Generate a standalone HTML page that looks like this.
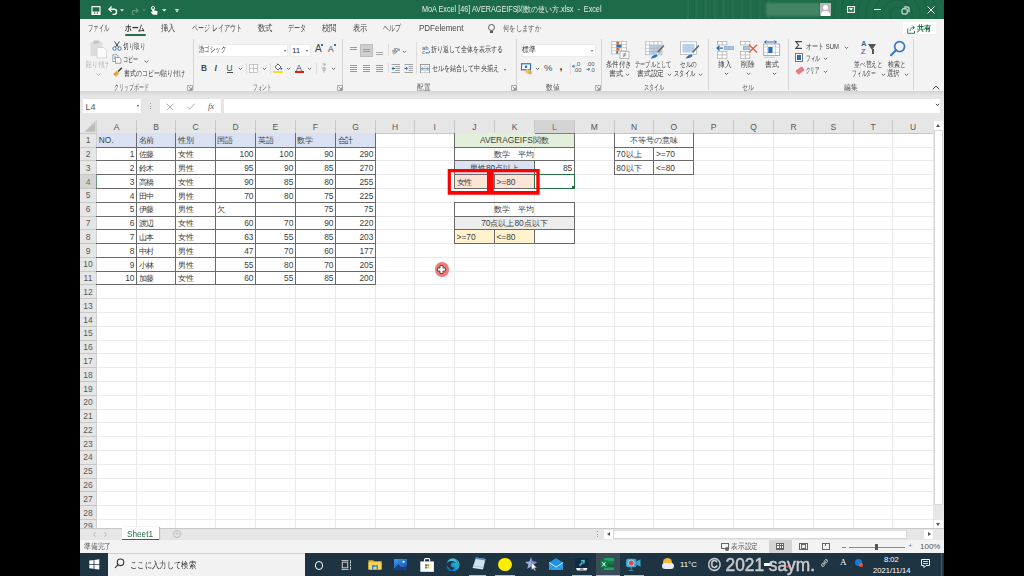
<!DOCTYPE html><html><head><meta charset='utf-8'><style>
*{margin:0;padding:0;box-sizing:border-box}
html,body{width:1024px;height:576px;overflow:hidden;background:#000;font-family:"Liberation Sans",sans-serif}
.a{position:absolute}
.t{position:absolute;white-space:nowrap;line-height:1}
.k{display:inline-block;font-size:1em;width:.95em;text-align:center;font-style:normal;overflow:visible}
</style></head><body><div class='a' style='left:0;top:0;width:1024px;height:576px;filter:blur(0.5px)'><div class="a" style="left:80px;top:0;width:864px;height:576px;background:#f3f3f3"></div>
<div class="a" style="left:80px;top:0;width:864px;height:19px;background:#1d6b48"></div>
<div class="a" style="left:80px;top:19px;width:864px;height:73px;background:#f3f3f3"></div>
<div class="a" style="left:80px;top:92px;width:864px;height:28px;background:#e6e6e6"></div>
<div class="a" style="left:80px;top:91px;width:864px;height:5px;background:linear-gradient(#d4d4d4,#e6e6e6)"></div>
<div class="a" style="left:83px;top:99px;width:58px;height:14px;background:#fff"></div>
<div class="a" style="left:160px;top:99px;width:61px;height:14px;background:#fff"></div>
<div class="a" style="left:224px;top:99px;width:716px;height:14px;background:#fff"></div>
<div class="t" style="left:85.5px;top:103.3px;font-size:9px;color:#5a5a5a">L4</div>
<div class="a" style="left:80px;top:120px;width:853.1px;height:13px;background:#e6e6e6"></div>
<div class="a" style="left:80px;top:133px;width:16.5px;height:395px;background:#e6e6e6"></div>
<div class="a" style="left:96.65px;top:133.3px;width:836.45px;height:394.7px;background:#fff"></div>
<div class="a" style="left:136.00px;top:133.3px;width:1px;height:394.7px;background:#eaeaea"></div>
<div class="a" style="left:136.00px;top:120px;width:1px;height:13px;background:#c8c8c8"></div>
<div class="a" style="left:175.05px;top:133.3px;width:1px;height:394.7px;background:#eaeaea"></div>
<div class="a" style="left:175.05px;top:120px;width:1px;height:13px;background:#c8c8c8"></div>
<div class="a" style="left:214.90px;top:133.3px;width:1px;height:394.7px;background:#eaeaea"></div>
<div class="a" style="left:214.90px;top:120px;width:1px;height:13px;background:#c8c8c8"></div>
<div class="a" style="left:255.05px;top:133.3px;width:1px;height:394.7px;background:#eaeaea"></div>
<div class="a" style="left:255.05px;top:120px;width:1px;height:13px;background:#c8c8c8"></div>
<div class="a" style="left:294.85px;top:133.3px;width:1px;height:394.7px;background:#eaeaea"></div>
<div class="a" style="left:294.85px;top:120px;width:1px;height:13px;background:#c8c8c8"></div>
<div class="a" style="left:335.00px;top:133.3px;width:1px;height:394.7px;background:#eaeaea"></div>
<div class="a" style="left:335.00px;top:120px;width:1px;height:13px;background:#c8c8c8"></div>
<div class="a" style="left:374.90px;top:133.3px;width:1px;height:394.7px;background:#eaeaea"></div>
<div class="a" style="left:374.90px;top:120px;width:1px;height:13px;background:#c8c8c8"></div>
<div class="a" style="left:414.30px;top:133.3px;width:1px;height:394.7px;background:#eaeaea"></div>
<div class="a" style="left:414.30px;top:120px;width:1px;height:13px;background:#c8c8c8"></div>
<div class="a" style="left:454.00px;top:133.3px;width:1px;height:394.7px;background:#eaeaea"></div>
<div class="a" style="left:454.00px;top:120px;width:1px;height:13px;background:#c8c8c8"></div>
<div class="a" style="left:493.90px;top:133.3px;width:1px;height:394.7px;background:#eaeaea"></div>
<div class="a" style="left:493.90px;top:120px;width:1px;height:13px;background:#c8c8c8"></div>
<div class="a" style="left:534.10px;top:133.3px;width:1px;height:394.7px;background:#eaeaea"></div>
<div class="a" style="left:534.10px;top:120px;width:1px;height:13px;background:#c8c8c8"></div>
<div class="a" style="left:573.80px;top:133.3px;width:1px;height:394.7px;background:#eaeaea"></div>
<div class="a" style="left:573.80px;top:120px;width:1px;height:13px;background:#c8c8c8"></div>
<div class="a" style="left:613.85px;top:133.3px;width:1px;height:394.7px;background:#eaeaea"></div>
<div class="a" style="left:613.85px;top:120px;width:1px;height:13px;background:#c8c8c8"></div>
<div class="a" style="left:653.40px;top:133.3px;width:1px;height:394.7px;background:#eaeaea"></div>
<div class="a" style="left:653.40px;top:120px;width:1px;height:13px;background:#c8c8c8"></div>
<div class="a" style="left:693.25px;top:133.3px;width:1px;height:394.7px;background:#eaeaea"></div>
<div class="a" style="left:693.25px;top:120px;width:1px;height:13px;background:#c8c8c8"></div>
<div class="a" style="left:732.95px;top:133.3px;width:1px;height:394.7px;background:#eaeaea"></div>
<div class="a" style="left:732.95px;top:120px;width:1px;height:13px;background:#c8c8c8"></div>
<div class="a" style="left:773.00px;top:133.3px;width:1px;height:394.7px;background:#eaeaea"></div>
<div class="a" style="left:773.00px;top:120px;width:1px;height:13px;background:#c8c8c8"></div>
<div class="a" style="left:812.90px;top:133.3px;width:1px;height:394.7px;background:#eaeaea"></div>
<div class="a" style="left:812.90px;top:120px;width:1px;height:13px;background:#c8c8c8"></div>
<div class="a" style="left:852.70px;top:133.3px;width:1px;height:394.7px;background:#eaeaea"></div>
<div class="a" style="left:852.70px;top:120px;width:1px;height:13px;background:#c8c8c8"></div>
<div class="a" style="left:892.35px;top:133.3px;width:1px;height:394.7px;background:#eaeaea"></div>
<div class="a" style="left:892.35px;top:120px;width:1px;height:13px;background:#c8c8c8"></div>
<div class="a" style="left:96.65px;top:146.59px;width:836.45px;height:1px;background:#eaeaea"></div>
<div class="a" style="left:80px;top:146.59px;width:16.5px;height:1px;background:#c8c8c8"></div>
<div class="a" style="left:96.65px;top:160.38px;width:836.45px;height:1px;background:#eaeaea"></div>
<div class="a" style="left:80px;top:160.38px;width:16.5px;height:1px;background:#c8c8c8"></div>
<div class="a" style="left:96.65px;top:174.17px;width:836.45px;height:1px;background:#eaeaea"></div>
<div class="a" style="left:80px;top:174.17px;width:16.5px;height:1px;background:#c8c8c8"></div>
<div class="a" style="left:96.65px;top:187.96px;width:836.45px;height:1px;background:#eaeaea"></div>
<div class="a" style="left:80px;top:187.96px;width:16.5px;height:1px;background:#c8c8c8"></div>
<div class="a" style="left:96.65px;top:201.75px;width:836.45px;height:1px;background:#eaeaea"></div>
<div class="a" style="left:80px;top:201.75px;width:16.5px;height:1px;background:#c8c8c8"></div>
<div class="a" style="left:96.65px;top:215.54px;width:836.45px;height:1px;background:#eaeaea"></div>
<div class="a" style="left:80px;top:215.54px;width:16.5px;height:1px;background:#c8c8c8"></div>
<div class="a" style="left:96.65px;top:229.33px;width:836.45px;height:1px;background:#eaeaea"></div>
<div class="a" style="left:80px;top:229.33px;width:16.5px;height:1px;background:#c8c8c8"></div>
<div class="a" style="left:96.65px;top:243.12px;width:836.45px;height:1px;background:#eaeaea"></div>
<div class="a" style="left:80px;top:243.12px;width:16.5px;height:1px;background:#c8c8c8"></div>
<div class="a" style="left:96.65px;top:256.91px;width:836.45px;height:1px;background:#eaeaea"></div>
<div class="a" style="left:80px;top:256.91px;width:16.5px;height:1px;background:#c8c8c8"></div>
<div class="a" style="left:96.65px;top:270.70px;width:836.45px;height:1px;background:#eaeaea"></div>
<div class="a" style="left:80px;top:270.70px;width:16.5px;height:1px;background:#c8c8c8"></div>
<div class="a" style="left:96.65px;top:284.49px;width:836.45px;height:1px;background:#eaeaea"></div>
<div class="a" style="left:80px;top:284.49px;width:16.5px;height:1px;background:#c8c8c8"></div>
<div class="a" style="left:96.65px;top:298.28px;width:836.45px;height:1px;background:#eaeaea"></div>
<div class="a" style="left:80px;top:298.28px;width:16.5px;height:1px;background:#c8c8c8"></div>
<div class="a" style="left:96.65px;top:312.07px;width:836.45px;height:1px;background:#eaeaea"></div>
<div class="a" style="left:80px;top:312.07px;width:16.5px;height:1px;background:#c8c8c8"></div>
<div class="a" style="left:96.65px;top:325.86px;width:836.45px;height:1px;background:#eaeaea"></div>
<div class="a" style="left:80px;top:325.86px;width:16.5px;height:1px;background:#c8c8c8"></div>
<div class="a" style="left:96.65px;top:339.65px;width:836.45px;height:1px;background:#eaeaea"></div>
<div class="a" style="left:80px;top:339.65px;width:16.5px;height:1px;background:#c8c8c8"></div>
<div class="a" style="left:96.65px;top:353.44px;width:836.45px;height:1px;background:#eaeaea"></div>
<div class="a" style="left:80px;top:353.44px;width:16.5px;height:1px;background:#c8c8c8"></div>
<div class="a" style="left:96.65px;top:367.23px;width:836.45px;height:1px;background:#eaeaea"></div>
<div class="a" style="left:80px;top:367.23px;width:16.5px;height:1px;background:#c8c8c8"></div>
<div class="a" style="left:96.65px;top:381.02px;width:836.45px;height:1px;background:#eaeaea"></div>
<div class="a" style="left:80px;top:381.02px;width:16.5px;height:1px;background:#c8c8c8"></div>
<div class="a" style="left:96.65px;top:394.81px;width:836.45px;height:1px;background:#eaeaea"></div>
<div class="a" style="left:80px;top:394.81px;width:16.5px;height:1px;background:#c8c8c8"></div>
<div class="a" style="left:96.65px;top:408.60px;width:836.45px;height:1px;background:#eaeaea"></div>
<div class="a" style="left:80px;top:408.60px;width:16.5px;height:1px;background:#c8c8c8"></div>
<div class="a" style="left:96.65px;top:422.39px;width:836.45px;height:1px;background:#eaeaea"></div>
<div class="a" style="left:80px;top:422.39px;width:16.5px;height:1px;background:#c8c8c8"></div>
<div class="a" style="left:96.65px;top:436.18px;width:836.45px;height:1px;background:#eaeaea"></div>
<div class="a" style="left:80px;top:436.18px;width:16.5px;height:1px;background:#c8c8c8"></div>
<div class="a" style="left:96.65px;top:449.97px;width:836.45px;height:1px;background:#eaeaea"></div>
<div class="a" style="left:80px;top:449.97px;width:16.5px;height:1px;background:#c8c8c8"></div>
<div class="a" style="left:96.65px;top:463.76px;width:836.45px;height:1px;background:#eaeaea"></div>
<div class="a" style="left:80px;top:463.76px;width:16.5px;height:1px;background:#c8c8c8"></div>
<div class="a" style="left:96.65px;top:477.55px;width:836.45px;height:1px;background:#eaeaea"></div>
<div class="a" style="left:80px;top:477.55px;width:16.5px;height:1px;background:#c8c8c8"></div>
<div class="a" style="left:96.65px;top:491.34px;width:836.45px;height:1px;background:#eaeaea"></div>
<div class="a" style="left:80px;top:491.34px;width:16.5px;height:1px;background:#c8c8c8"></div>
<div class="a" style="left:96.65px;top:505.13px;width:836.45px;height:1px;background:#eaeaea"></div>
<div class="a" style="left:80px;top:505.13px;width:16.5px;height:1px;background:#c8c8c8"></div>
<div class="a" style="left:96.65px;top:518.92px;width:836.45px;height:1px;background:#eaeaea"></div>
<div class="a" style="left:80px;top:518.92px;width:16.5px;height:1px;background:#c8c8c8"></div>
<div class="a" style="left:80px;top:132.9px;width:853.1px;height:1px;background:#c6c6c6"></div>
<div class="a" style="left:96.2px;top:120px;width:1px;height:408px;background:#cfcfcf"></div>
<div class="t" style="left:96.65px;width:39.85px;text-align:center;top:123px;font-size:8.5px;color:#555">A</div>
<div class="t" style="left:136.50px;width:39.05px;text-align:center;top:123px;font-size:8.5px;color:#555">B</div>
<div class="t" style="left:175.55px;width:39.85px;text-align:center;top:123px;font-size:8.5px;color:#555">C</div>
<div class="t" style="left:215.40px;width:40.15px;text-align:center;top:123px;font-size:8.5px;color:#555">D</div>
<div class="t" style="left:255.55px;width:39.80px;text-align:center;top:123px;font-size:8.5px;color:#555">E</div>
<div class="t" style="left:295.35px;width:40.15px;text-align:center;top:123px;font-size:8.5px;color:#555">F</div>
<div class="t" style="left:335.50px;width:39.90px;text-align:center;top:123px;font-size:8.5px;color:#555">G</div>
<div class="t" style="left:375.40px;width:39.40px;text-align:center;top:123px;font-size:8.5px;color:#555">H</div>
<div class="t" style="left:414.80px;width:39.70px;text-align:center;top:123px;font-size:8.5px;color:#555">I</div>
<div class="t" style="left:454.50px;width:39.90px;text-align:center;top:123px;font-size:8.5px;color:#555">J</div>
<div class="t" style="left:494.40px;width:40.20px;text-align:center;top:123px;font-size:8.5px;color:#555">K</div>
<div class="t" style="left:534.60px;width:39.70px;text-align:center;top:123px;font-size:8.5px;color:#555">L</div>
<div class="t" style="left:574.30px;width:40.05px;text-align:center;top:123px;font-size:8.5px;color:#555">M</div>
<div class="t" style="left:614.35px;width:39.55px;text-align:center;top:123px;font-size:8.5px;color:#555">N</div>
<div class="t" style="left:653.90px;width:39.85px;text-align:center;top:123px;font-size:8.5px;color:#555">O</div>
<div class="t" style="left:693.75px;width:39.70px;text-align:center;top:123px;font-size:8.5px;color:#555">P</div>
<div class="t" style="left:733.45px;width:40.05px;text-align:center;top:123px;font-size:8.5px;color:#555">Q</div>
<div class="t" style="left:773.50px;width:39.90px;text-align:center;top:123px;font-size:8.5px;color:#555">R</div>
<div class="t" style="left:813.40px;width:39.80px;text-align:center;top:123px;font-size:8.5px;color:#555">S</div>
<div class="t" style="left:853.20px;width:39.65px;text-align:center;top:123px;font-size:8.5px;color:#555">T</div>
<div class="t" style="left:892.85px;width:40.25px;text-align:center;top:123px;font-size:8.5px;color:#555">U</div>
<div class="t" style="left:80px;width:16px;text-align:center;top:136.30px;font-size:8.5px;color:#5a5a5a">1</div>
<div class="t" style="left:80px;width:16px;text-align:center;top:150.09px;font-size:8.5px;color:#5a5a5a">2</div>
<div class="t" style="left:80px;width:16px;text-align:center;top:163.88px;font-size:8.5px;color:#5a5a5a">3</div>
<div class="t" style="left:80px;width:16px;text-align:center;top:177.67px;font-size:8.5px;color:#5a5a5a">4</div>
<div class="t" style="left:80px;width:16px;text-align:center;top:191.46px;font-size:8.5px;color:#5a5a5a">5</div>
<div class="t" style="left:80px;width:16px;text-align:center;top:205.25px;font-size:8.5px;color:#5a5a5a">6</div>
<div class="t" style="left:80px;width:16px;text-align:center;top:219.04px;font-size:8.5px;color:#5a5a5a">7</div>
<div class="t" style="left:80px;width:16px;text-align:center;top:232.83px;font-size:8.5px;color:#5a5a5a">8</div>
<div class="t" style="left:80px;width:16px;text-align:center;top:246.62px;font-size:8.5px;color:#5a5a5a">9</div>
<div class="t" style="left:80px;width:16px;text-align:center;top:260.41px;font-size:8.5px;color:#5a5a5a">10</div>
<div class="t" style="left:80px;width:16px;text-align:center;top:274.20px;font-size:8.5px;color:#5a5a5a">11</div>
<div class="t" style="left:80px;width:16px;text-align:center;top:287.99px;font-size:8.5px;color:#5a5a5a">12</div>
<div class="t" style="left:80px;width:16px;text-align:center;top:301.78px;font-size:8.5px;color:#5a5a5a">13</div>
<div class="t" style="left:80px;width:16px;text-align:center;top:315.57px;font-size:8.5px;color:#5a5a5a">14</div>
<div class="t" style="left:80px;width:16px;text-align:center;top:329.36px;font-size:8.5px;color:#5a5a5a">15</div>
<div class="t" style="left:80px;width:16px;text-align:center;top:343.15px;font-size:8.5px;color:#5a5a5a">16</div>
<div class="t" style="left:80px;width:16px;text-align:center;top:356.94px;font-size:8.5px;color:#5a5a5a">17</div>
<div class="t" style="left:80px;width:16px;text-align:center;top:370.73px;font-size:8.5px;color:#5a5a5a">18</div>
<div class="t" style="left:80px;width:16px;text-align:center;top:384.52px;font-size:8.5px;color:#5a5a5a">19</div>
<div class="t" style="left:80px;width:16px;text-align:center;top:398.31px;font-size:8.5px;color:#5a5a5a">20</div>
<div class="t" style="left:80px;width:16px;text-align:center;top:412.10px;font-size:8.5px;color:#5a5a5a">21</div>
<div class="t" style="left:80px;width:16px;text-align:center;top:425.89px;font-size:8.5px;color:#5a5a5a">22</div>
<div class="t" style="left:80px;width:16px;text-align:center;top:439.68px;font-size:8.5px;color:#5a5a5a">23</div>
<div class="t" style="left:80px;width:16px;text-align:center;top:453.47px;font-size:8.5px;color:#5a5a5a">24</div>
<div class="t" style="left:80px;width:16px;text-align:center;top:467.26px;font-size:8.5px;color:#5a5a5a">25</div>
<div class="t" style="left:80px;width:16px;text-align:center;top:481.05px;font-size:8.5px;color:#5a5a5a">26</div>
<div class="t" style="left:80px;width:16px;text-align:center;top:494.84px;font-size:8.5px;color:#5a5a5a">27</div>
<div class="t" style="left:80px;width:16px;text-align:center;top:508.63px;font-size:8.5px;color:#5a5a5a">28</div>
<div class="t" style="left:80px;width:16px;text-align:center;top:522.42px;font-size:8.5px;color:#5a5a5a">29</div>
<svg class="a" style="left:91px;top:6px" width="10" height="9" viewBox="0 0 10 9"><path d="M1 0.6H9V8.4H1Z" fill="none" stroke="#fff" stroke-width="1.1"/><rect x="1" y="5.6" width="8" height="2.8" fill="#fff"/><rect x="3" y="6.4" width="1.3" height="1.2" fill="#1d6b48"/><rect x="5.7" y="6.4" width="1.3" height="1.2" fill="#1d6b48"/></svg>
<svg class="a" style="left:107.5px;top:6px" width="10" height="9" viewBox="0 0 10 9"><path d="M1.2 3.2H6A2.6 2.6 0 0 1 6 8.4H4.5" fill="none" stroke="#fff" stroke-width="1.4"/><path d="M3.6 0.6L1 3.2L3.6 5.8" fill="none" stroke="#fff" stroke-width="1.4"/></svg>
<svg class="a" style="left:119.8px;top:8.6px" width="4" height="3" viewBox="0 0 4 3"><path d="M0 0.3H4L2 2.5Z" fill="#e6efe9"/></svg>
<svg class="a" style="left:129.5px;top:7.5px" width="9" height="7" viewBox="0 0 9 7"><path d="M8 2.6H3.5A2.3 2.3 0 0 0 3.5 6.8H4.5" fill="none" stroke="#5f9d7c" stroke-width="1.2"/><path d="M5.8 0.5L8 2.6L5.8 4.7" fill="none" stroke="#5f9d7c" stroke-width="1.2"/></svg>
<svg class="a" style="left:142px;top:8.6px" width="4" height="3" viewBox="0 0 4 3"><path d="M0 0.3H4L2 2.5Z" fill="#4f8f6c"/></svg>
<svg class="a" style="left:150px;top:6px" width="8" height="9" viewBox="0 0 8 9"><circle cx="3" cy="2.2" r="1.7" fill="none" stroke="#fff" stroke-width="1"/><path d="M2.3 2.5V6L1.2 5.5L1 6.5L3 8.8H7.2L7.6 5.2L3.8 4.2V2.5Z" fill="#fff"/></svg>
<svg class="a" style="left:162px;top:8.6px" width="4.5" height="3" viewBox="0 0 4.5 3"><path d="M0 0.3H4.5L2.25 2.6Z" fill="#fff"/></svg>
<svg class="a" style="left:175.3px;top:8.6px" width="4" height="3.5" viewBox="0 0 4 3.5"><rect x="0.3" y="0" width="3.4" height="0.9" fill="#fff"/><path d="M0.3 1.5H3.7L2 3.4Z" fill="#fff"/></svg>
<div class="t f" style="left:421.5px;top:5px;font-size:8.4px;color:#e8f0eb;--w:179.5px;">MoA Excel [46] AVERAGEIFS関数の使い方.xlsx&nbsp; - &nbsp;Excel</div>
<div class="a" style="left:680px;top:0;width:90px;height:19px;background:repeating-linear-gradient(90deg,rgba(255,255,255,0) 0 5px,rgba(0,0,0,.05) 5px 6px,rgba(255,255,255,.03) 6px 9px)"></div>
<div class="a" style="left:832px;top:0;width:112px;height:19px;overflow:hidden"><div class="a" style="left:-10px;top:-60px;width:150px;height:150px;border-radius:50%;background:repeating-radial-gradient(circle,rgba(0,0,0,0) 0 6px,rgba(0,0,0,.06) 6px 8px)"></div></div>
<div class="a" style="left:766px;top:3px;width:54px;height:12.6px;background:repeating-linear-gradient(#4b8c69 0 1.5px,#3f8060 1.5px 3px);filter:blur(0.8px)"></div>
<div class="a" style="left:820px;top:3px;width:11.3px;height:13.2px;background:#b9b9b9;overflow:hidden"><div class="a" style="left:3px;top:1.8px;width:5.3px;height:5.3px;background:#fff;border-radius:50%"></div><div class="a" style="left:1px;top:7.6px;width:9.3px;height:8px;background:#fff;border-radius:4px 4px 0 0"></div></div>
<div class="a" style="left:847px;top:6.3px;width:8px;height:6.5px;border:1px solid #e8f0ea;background:rgba(255,255,255,.15)"></div>
<svg class="a" style="left:849.3px;top:8px" width="4" height="3" viewBox="0 0 4 3"><path d="M0 0H4L2 2.6Z" fill="#fff"/></svg>
<div class="a" style="left:874px;top:9.3px;width:6.5px;height:1px;background:#fff"></div>
<svg class="a" style="left:900.5px;top:5.5px" width="9" height="9" viewBox="0 0 9 9"><rect x="1" y="2.8" width="5.2" height="5.2" rx="1" fill="none" stroke="#fff" stroke-width="1"/><path d="M2.8 1H7A1 1 0 0 1 8 2V6.2" fill="none" stroke="#fff" stroke-width="1"/></svg>
<svg class="a" style="left:926.5px;top:5.5px" width="8" height="8" viewBox="0 0 8 8"><path d="M0.5 0.5L7.5 7.5M7.5 0.5L0.5 7.5" stroke="#fff" stroke-width="1"/></svg>
<div class="t f" style="left:87.8px;top:24px;font-size:8.6px;color:#474747;--w:21.1px;font-weight:normal">ファイル</div>
<div class="t f" style="left:125px;top:24px;font-size:8.6px;color:#333;--w:20px;font-weight:bold">ホーム</div>
<div class="t f" style="left:160.5px;top:24px;font-size:8.6px;color:#474747;--w:14.5px;font-weight:normal">挿入</div>
<div class="t f" style="left:191.5px;top:24px;font-size:8.6px;color:#474747;--w:49.7px;font-weight:normal">ページ レイアウト</div>
<div class="t f" style="left:258px;top:24px;font-size:8.6px;color:#474747;--w:14.8px;font-weight:normal">数式</div>
<div class="t f" style="left:288.4px;top:24px;font-size:8.6px;color:#474747;--w:18px;font-weight:normal">データ</div>
<div class="t f" style="left:322px;top:24px;font-size:8.6px;color:#474747;--w:14.9px;font-weight:normal">校閲</div>
<div class="t f" style="left:352.5px;top:24px;font-size:8.6px;color:#474747;--w:14.5px;font-weight:normal">表示</div>
<div class="t f" style="left:383px;top:24px;font-size:8.6px;color:#474747;--w:18px;font-weight:normal">ヘルプ</div>
<div class="t f" style="left:418.5px;top:24px;font-size:8.6px;color:#474747;--w:44.5px;font-weight:normal">PDFelement</div>
<div class="a" style="left:125px;top:33.5px;width:21px;height:2px;background:#217346;border-radius:1px"></div>
<div class="a" style="left:488px;top:24px;width:7px;height:7px;border:1px solid #555;border-radius:50%"></div>
<div class="a" style="left:490px;top:31px;width:3px;height:2px;background:#555"></div>
<div class="t f" style="left:503px;top:24px;font-size:8.4px;color:#555;--w:38px;">何をしますか</div>
<div class="a" style="left:903px;top:22px;width:33px;height:12px;background:#fff"></div>
<svg class="a" style="left:906.5px;top:24.5px" width="9" height="9" viewBox="0 0 9 9"><path d="M0.7 3.5V8.3H7.5V6" fill="none" stroke="#3d7a5a" stroke-width="1"/><path d="M3 6C3 3.5 4.5 2.5 7 2.5M5.5 0.8L7.5 2.5L5.5 4.2" fill="none" stroke="#3d7a5a" stroke-width="1"/></svg>
<div class="t f" style="left:916.7px;top:24px;font-size:8.4px;color:#217346;--w:14.5px;font-weight:bold">共有</div>
<div class="a" style="left:192.5px;top:39px;width:1px;height:51px;background:#d4d4d4"></div>
<div class="a" style="left:342px;top:39px;width:1px;height:51px;background:#d4d4d4"></div>
<div class="a" style="left:515.5px;top:39px;width:1px;height:51px;background:#d4d4d4"></div>
<div class="a" style="left:600.5px;top:39px;width:1px;height:51px;background:#d4d4d4"></div>
<div class="a" style="left:708px;top:39px;width:1px;height:51px;background:#d4d4d4"></div>
<div class="a" style="left:788px;top:39px;width:1px;height:51px;background:#d4d4d4"></div>
<div class="a" style="left:912.8px;top:39px;width:1px;height:51px;background:#d4d4d4"></div>
<div class="t f" style="left:114px;top:83.5px;font-size:7.8px;color:#555;--w:34.7px;">クリップボード</div>
<div class="t f" style="left:253.3px;top:83.5px;font-size:7.8px;color:#555;--w:18.7px;">フォント</div>
<div class="t f" style="left:417.3px;top:83.5px;font-size:7.8px;color:#555;--w:13.3px;">配置</div>
<div class="t f" style="left:546px;top:83.5px;font-size:7.8px;color:#555;--w:13.5px;">数値</div>
<div class="t f" style="left:643.7px;top:83.5px;font-size:7.8px;color:#555;--w:20.3px;">スタイル</div>
<div class="t f" style="left:742px;top:83.5px;font-size:7.8px;color:#555;--w:12px;">セル</div>
<div class="t f" style="left:843.7px;top:83.5px;font-size:7.8px;color:#555;--w:13.3px;">編集</div>
<svg class="a" style="left:186.5px;top:84.5px" width="6" height="6" viewBox="0 0 6 6"><path d="M0.5 5.5V0.5H5.5V5.5Z" fill="none" stroke="#999" stroke-width="0.8"/><path d="M1.8 1.8L4.6 4.6M4.6 2.6V4.6H2.6" fill="none" stroke="#777" stroke-width="0.8"/></svg>
<svg class="a" style="left:336.5px;top:84.5px" width="6" height="6" viewBox="0 0 6 6"><path d="M0.5 5.5V0.5H5.5V5.5Z" fill="none" stroke="#999" stroke-width="0.8"/><path d="M1.8 1.8L4.6 4.6M4.6 2.6V4.6H2.6" fill="none" stroke="#777" stroke-width="0.8"/></svg>
<svg class="a" style="left:510.5px;top:84.5px" width="6" height="6" viewBox="0 0 6 6"><path d="M0.5 5.5V0.5H5.5V5.5Z" fill="none" stroke="#999" stroke-width="0.8"/><path d="M1.8 1.8L4.6 4.6M4.6 2.6V4.6H2.6" fill="none" stroke="#777" stroke-width="0.8"/></svg>
<svg class="a" style="left:594.5px;top:84.5px" width="6" height="6" viewBox="0 0 6 6"><path d="M0.5 5.5V0.5H5.5V5.5Z" fill="none" stroke="#999" stroke-width="0.8"/><path d="M1.8 1.8L4.6 4.6M4.6 2.6V4.6H2.6" fill="none" stroke="#777" stroke-width="0.8"/></svg>
<svg class="a" style="left:932px;top:85px" width="8" height="5" viewBox="0 0 8 5"><path d="M0.8 4.2L4 1L7.2 4.2" fill="none" stroke="#555" stroke-width="1"/></svg>
<svg class="a" style="left:89px;top:39px" width="20" height="20" viewBox="0 0 20 20"><rect x="1.5" y="3" width="12" height="14" rx="1" fill="#dcdcdc"/><rect x="4.5" y="1.5" width="6" height="3" rx="1" fill="#c4c4c4"/><path d="M8 8.5H15L17.5 11V19H8Z" fill="#fbfbfb" stroke="#cfcfcf" stroke-width="0.8"/></svg>
<div class="t f" style="left:86px;top:60.5px;font-size:7.8px;color:#b0b0b0;--w:23px;">貼り付け</div>
<svg class="a" style="left:95.5px;top:72.5px" width="5" height="3" viewBox="0 0 5 3"><path d="M0.5 0.5L2.5 2.5L4.5 0.5" fill="none" stroke="#b0b0b0" stroke-width="0.9"/></svg>
<svg class="a" style="left:112px;top:41px" width="10" height="10" viewBox="0 0 10 10"><path d="M2.5 0.5L6.5 6M7.5 0.5L3.5 6" stroke="#444" stroke-width="1" fill="none"/><circle cx="2.5" cy="7.6" r="1.7" fill="none" stroke="#2b6fb5" stroke-width="0.9"/><circle cx="7.5" cy="7.6" r="1.7" fill="none" stroke="#2b6fb5" stroke-width="0.9"/></svg>
<div class="t f" style="left:123px;top:42.5px;font-size:7.8px;color:#3c3c3c;--w:22.6px;">切り取り</div>
<svg class="a" style="left:112px;top:54px" width="10" height="10" viewBox="0 0 10 10"><path d="M0.8 0.8H5L6 1.8V7.5H0.8Z" fill="#fff" stroke="#888" stroke-width="0.8"/><path d="M3.5 3.5H7.5L9 5V9.3H3.5Z" fill="#fff" stroke="#888" stroke-width="0.8"/><path d="M2 3H4M2 4.5H3" stroke="#2b6fb5" stroke-width="0.7"/></svg>
<div class="t f" style="left:123px;top:55.5px;font-size:7.8px;color:#3c3c3c;--w:15.6px;">コピー</div>
<svg class="a" style="left:143.5px;top:59.5px" width="5" height="3" viewBox="0 0 5 3"><path d="M0.5 0.5L2.5 2.5L4.5 0.5" fill="none" stroke="#555" stroke-width="0.9"/></svg>
<svg class="a" style="left:112px;top:67px" width="11" height="11" viewBox="0 0 11 11"><path d="M1 7L5 3.5L7.5 6L4 10Z" fill="#f0b040"/><path d="M2 8L5 5.5" stroke="#d08020" stroke-width="0.8"/><path d="M6.2 4.5L9.8 0.8" stroke="#333" stroke-width="1.4"/></svg>
<div class="t f" style="left:123.7px;top:69.5px;font-size:7.8px;color:#3c3c3c;--w:60.7px;">書式のコピー/貼り付け</div>
<div class="a" style="left:197.5px;top:44px;width:90.5px;height:12.5px;background:#fff;border:1px solid #ebebeb"></div>
<div class="t f" style="left:198.6px;top:46px;font-size:7.8px;color:#333;--w:27px;">游ゴシック</div>
<div class="a" style="left:283.5px;top:49.5px;width:0;height:0;border-left:1.8px solid transparent;border-right:1.8px solid transparent;border-top:2px solid #666"></div>
<div class="a" style="left:290px;top:44px;width:21px;height:12.5px;background:#fff;border:1px solid #ebebeb"></div>
<div class="t" style="left:292px;top:46.5px;font-size:8px;color:#333;">11</div>
<div class="a" style="left:306px;top:49.5px;width:0;height:0;border-left:1.8px solid transparent;border-right:1.8px solid transparent;border-top:2px solid #666"></div>
<div class="t" style="left:315px;top:43.5px;font-size:10px;color:#444;">A</div>
<div class="a" style="left:321px;top:44px;width:2px;height:2px;background:#2b6fb5"></div>
<div class="t" style="left:328px;top:45px;font-size:8.5px;color:#444;">A</div>
<div class="a" style="left:334px;top:44px;width:2px;height:2px;background:#2b6fb5"></div>
<div class="t" style="left:200.9px;top:64.3px;font-size:8.4px;color:#4a4a4a;font-weight:bold">B</div>
<div class="t" style="left:214.5px;top:64.3px;font-size:8.4px;color:#4a4a4a;font-style:italic;font-weight:bold">I</div>
<div class="t" style="left:226.5px;top:64.3px;font-size:8.4px;color:#4a4a4a;">U</div>
<div class="a" style="left:226.5px;top:72px;width:6px;height:0.9px;background:#4a4a4a"></div>
<svg class="a" style="left:237.7px;top:67.2px" width="5" height="3.5" viewBox="0 0 5 3.5"><path d="M0.9 0.8L2.5 2.6L4.1 0.8" fill="none" stroke="#777" stroke-width="1"/></svg>
<svg class="a" style="left:249px;top:64px" width="9" height="9" viewBox="0 0 9 9"><rect x="0.5" y="0.5" width="8" height="8" fill="#fff" stroke="#bbb" stroke-width="0.8"/><path d="M4.5 0.5V8.5M0.5 4.5H8.5" stroke="#bbb" stroke-width="0.8"/></svg>
<svg class="a" style="left:261.8px;top:67.2px" width="5" height="3.5" viewBox="0 0 5 3.5"><path d="M0.9 0.8L2.5 2.6L4.1 0.8" fill="none" stroke="#777" stroke-width="1"/></svg>
<svg class="a" style="left:273px;top:62px" width="10" height="11" viewBox="0 0 10 11"><path d="M2 5L5 2L8 5L5 8Z" fill="#fff" stroke="#555" stroke-width="0.9"/><path d="M4 1.5L5 2.5" stroke="#555" stroke-width="0.9"/><circle cx="8.3" cy="6.8" r="1" fill="#2b6fb5"/><rect x="0.3" y="9" width="9.6" height="2" fill="#f4e01a"/></svg>
<svg class="a" style="left:286.0px;top:67.2px" width="5" height="3.5" viewBox="0 0 5 3.5"><path d="M0.9 0.8L2.5 2.6L4.1 0.8" fill="none" stroke="#777" stroke-width="1"/></svg>
<div class="t" style="left:296px;top:63.6px;font-size:8.8px;color:#444;">A</div>
<div class="a" style="left:294.6px;top:71.2px;width:9.4px;height:1.8px;background:#e21b1b"></div>
<svg class="a" style="left:307.2px;top:67.2px" width="5" height="3.5" viewBox="0 0 5 3.5"><path d="M0.9 0.8L2.5 2.6L4.1 0.8" fill="none" stroke="#777" stroke-width="1"/></svg>
<svg class="a" style="left:321px;top:63px" width="6" height="10" viewBox="0 0 6 10"><path d="M1.5 1H4.5L3 3" fill="none" stroke="#888" stroke-width="0.7"/><path d="M0.8 5H5.2M3 4V9.5M1 7H5" stroke="#aaa" stroke-width="0.9"/></svg>
<svg class="a" style="left:331.4px;top:67.2px" width="5" height="3.5" viewBox="0 0 5 3.5"><path d="M0.9 0.8L2.5 2.6L4.1 0.8" fill="none" stroke="#777" stroke-width="1"/></svg>
<div class="a" style="left:246.2px;top:63px;width:1px;height:11px;background:#dcdcdc"></div>
<div class="a" style="left:270.4px;top:63px;width:1px;height:11px;background:#dcdcdc"></div>
<div class="a" style="left:315.8px;top:63px;width:1px;height:11px;background:#dcdcdc"></div>
<div class="a" style="left:350px;top:47px;width:7px;height:1px;background:#9a9a9a"></div>
<div class="a" style="left:350px;top:49px;width:7px;height:1px;background:#9a9a9a"></div>
<div class="a" style="left:360px;top:44px;width:13px;height:13px;background:#cfcfcf;border:1px solid #bdbdbd"></div>
<div class="a" style="left:363px;top:49px;width:7px;height:1px;background:#9a9a9a"></div>
<div class="a" style="left:363px;top:51px;width:7px;height:1px;background:#9a9a9a"></div>
<div class="a" style="left:376px;top:52px;width:7px;height:1px;background:#aaa"></div>
<div class="a" style="left:376px;top:54px;width:7px;height:1px;background:#aaa"></div>
<div class="a" style="left:387.5px;top:44.4px;width:1px;height:12px;background:#ddd"></div>
<svg class="a" style="left:391px;top:45.5px" width="9" height="9" viewBox="0 0 9 9"><text x="0" y="6.5" font-size="6.5" font-family="Liberation Sans" fill="#666" transform="rotate(-35 4 4)">ab</text><path d="M3 8.5L8.5 3M6.8 3H8.5V4.7" fill="none" stroke="#888" stroke-width="0.7"/></svg>
<svg class="a" style="left:401.7px;top:49.7px" width="5" height="3.5" viewBox="0 0 5 3.5"><path d="M0.9 0.8L2.5 2.6L4.1 0.8" fill="none" stroke="#777" stroke-width="1"/></svg>
<div class="a" style="left:416.2px;top:42px;width:1px;height:32px;background:#ddd"></div>
<svg class="a" style="left:422px;top:45px" width="9" height="10" viewBox="0 0 9 10"><text x="0" y="5" font-size="5.8" font-family="Liberation Sans" fill="#555">ab</text><text x="0" y="9.3" font-size="5.8" font-family="Liberation Sans" fill="#555">c</text><path d="M4 7.8H7.5V6M4.8 7L4 7.8L4.8 8.6" fill="none" stroke="#2b6fb5" stroke-width="0.8"/></svg>
<div class="t f" style="left:431.4px;top:46px;font-size:7.8px;color:#3c3c3c;--w:72.3px;">折り返して全体を表示する</div>
<div class="a" style="left:350px;top:65px;width:7px;height:1px;background:#9a9a9a"></div>
<div class="a" style="left:350px;top:67px;width:7px;height:1px;background:#9a9a9a"></div>
<div class="a" style="left:350px;top:69px;width:7px;height:1px;background:#9a9a9a"></div>
<div class="a" style="left:350px;top:71px;width:7px;height:1px;background:#9a9a9a"></div>
<div class="a" style="left:363px;top:65px;width:7px;height:1px;background:#9a9a9a"></div>
<div class="a" style="left:363px;top:67px;width:7px;height:1px;background:#9a9a9a"></div>
<div class="a" style="left:363px;top:69px;width:7px;height:1px;background:#9a9a9a"></div>
<div class="a" style="left:363px;top:71px;width:7px;height:1px;background:#9a9a9a"></div>
<div class="a" style="left:376px;top:65px;width:7px;height:1px;background:#9a9a9a"></div>
<div class="a" style="left:376px;top:67px;width:7px;height:1px;background:#9a9a9a"></div>
<div class="a" style="left:376px;top:69px;width:7px;height:1px;background:#9a9a9a"></div>
<div class="a" style="left:376px;top:71px;width:7px;height:1px;background:#9a9a9a"></div>
<div class="a" style="left:387.5px;top:63px;width:1px;height:10px;background:#ddd"></div>
<svg class="a" style="left:390.5px;top:63px" width="9.5" height="10" viewBox="0 0 9.5 10"><path d="M0.5 1.5H9M4.6 3.5H9M4.6 5.5H9M4.6 7.5H9M0.5 9.5H9" stroke="#9a9a9a" stroke-width="0.9"/><path d="M0.5 5.5L2.5 3.5V7.5Z M2.3 4.9H4V6.1H2.3Z" fill="#2b6fb5"/></svg>
<svg class="a" style="left:403.5px;top:63px" width="9.5" height="10" viewBox="0 0 9.5 10"><path d="M0.5 1.5H9M4.6 3.5H9M4.6 5.5H9M4.6 7.5H9M0.5 9.5H9" stroke="#9a9a9a" stroke-width="0.9"/><path d="M4 5.5L2 3.5V7.5Z M0.5 4.9H2.2V6.1H0.5Z" fill="#2b6fb5"/></svg>
<svg class="a" style="left:420.3px;top:63.6px" width="10" height="9.5" viewBox="0 0 10 9.5"><rect x="0.5" y="0.5" width="9" height="8.5" fill="#fff" stroke="#888" stroke-width="0.8"/><path d="M5 0.5V3M5 6.5V9M0.5 3H9.5M0.5 6.5H9.5" stroke="#bbb" stroke-width="0.6"/><path d="M1.5 4.75H8.5M2.6 3.9L1.5 4.75L2.6 5.6M7.4 3.9L8.5 4.75L7.4 5.6" fill="none" stroke="#2b6fb5" stroke-width="0.8"/></svg>
<div class="t f" style="left:432px;top:64.5px;font-size:7.8px;color:#3c3c3c;--w:66.7px;">セルを結合して中央揃え</div>
<div class="a" style="left:503.5px;top:69px;width:0;height:0;border-left:1.8px solid transparent;border-right:1.8px solid transparent;border-top:2px solid #666"></div>
<div class="a" style="left:520.5px;top:44px;width:75px;height:12.5px;background:#fff;border:1px solid #ebebeb"></div>
<div class="t f" style="left:522px;top:46px;font-size:7.8px;color:#333;--w:13.3px;">標準</div>
<div class="a" style="left:591px;top:49.5px;width:0;height:0;border-left:1.8px solid transparent;border-right:1.8px solid transparent;border-top:2px solid #666"></div>
<svg class="a" style="left:520.5px;top:62.5px" width="12" height="12" viewBox="0 0 12 12"><rect x="0.5" y="0.8" width="9" height="6" fill="#fff" stroke="#2b6fb5" stroke-width="1.2"/><circle cx="5" cy="3.8" r="1.3" fill="#2b6fb5"/><circle cx="6.5" cy="8.5" r="2.2" fill="#f2c46d"/><circle cx="9" cy="9.5" r="2" fill="#e8b04a"/></svg>
<svg class="a" style="left:534.5px;top:67.2px" width="5" height="3.5" viewBox="0 0 5 3.5"><path d="M0.9 0.8L2.5 2.6L4.1 0.8" fill="none" stroke="#777" stroke-width="1"/></svg>
<div class="t" style="left:544px;top:63.3px;font-size:9.5px;color:#505050;">%</div>
<div class="t" style="left:559.5px;top:61px;font-size:10.5px;color:#333;font-weight:bold">,</div>
<div class="a" style="left:569.5px;top:63px;width:1px;height:12px;background:#ddd"></div>
<svg class="a" style="left:572px;top:63px" width="9" height="11" viewBox="0 0 9 11"><path d="M0.5 3.2H3.2M1.8 1.8L0.5 3.2L1.8 4.6" fill="none" stroke="#2b6fb5" stroke-width="0.9"/></svg>
<div class="t" style="left:575.5px;top:62.3px;font-size:5.8px;color:#555;">.0</div>
<div class="t" style="left:573.5px;top:67.5px;font-size:5.8px;color:#555;">.00</div>
<div class="t" style="left:586.5px;top:62.3px;font-size:5.8px;color:#555;">.00</div>
<svg class="a" style="left:586px;top:67px" width="5" height="5" viewBox="0 0 5 5"><path d="M0.4 2.3H3.6M2.4 1L3.7 2.3L2.4 3.6" fill="none" stroke="#2b6fb5" stroke-width="0.9"/></svg>
<div class="t" style="left:590px;top:67.5px;font-size:5.8px;color:#555;">.0</div>
<svg class="a" style="left:611px;top:40.5px" width="19" height="18" viewBox="0 0 19 18"><g stroke="#b4b4b4" stroke-width="0.7" fill="#fff"><rect x="0.4" y="0.4" width="15.2" height="12.6"/></g><path d="M0.4 3.55H15.6M0.4 6.7H15.6M0.4 9.85H15.6M5.5 0.4V13M10.5 0.4V13" stroke="#b4b4b4" stroke-width="0.7"/><rect x="5.5" y="0.6" width="2.6" height="2.8" fill="#e06a2c"/><rect x="5.5" y="3.7" width="5" height="2.8" fill="#2b6fb5"/><rect x="5.5" y="6.8" width="3" height="2.8" fill="#e06a2c"/><rect x="5.5" y="9.9" width="1.6" height="2.8" fill="#2b6fb5"/><rect x="9" y="10.3" width="9" height="7.2" fill="#fff" stroke="#999" stroke-width="0.7"/><path d="M11.5 13H15.5M11.5 14.8H15.5M14.5 11.8L12.5 16" stroke="#666" stroke-width="0.6"/></svg>
<div class="t f" style="left:606.2px;top:60.5px;font-size:7.8px;color:#3c3c3c;--w:25.8px;">条件付き</div>
<div class="t f" style="left:609.4px;top:69.5px;font-size:7.8px;color:#3c3c3c;--w:14px;">書式</div>
<svg class="a" style="left:624.5px;top:72.7px" width="5" height="3.5" viewBox="0 0 5 3.5"><path d="M0.9 0.8L2.5 2.6L4.1 0.8" fill="none" stroke="#777" stroke-width="1"/></svg>
<svg class="a" style="left:644.5px;top:40.5px" width="20" height="18" viewBox="0 0 20 18"><rect x="0.5" y="0.8" width="16.5" height="13" fill="#fff" stroke="#b4b4b4" stroke-width="0.7"/><rect x="4.6" y="4" width="12.4" height="9.8" fill="#b7cfea"/><path d="M0.5 4H17M0.5 7.3H17M0.5 10.5H17M4.6 0.8V13.8M8.8 0.8V13.8M12.9 0.8V13.8" stroke="#b4b4b4" stroke-width="0.7"/><path d="M18.8 4.5L12.5 11.5" stroke="#666" stroke-width="1.6"/><path d="M12.5 11L14 12.6L11.5 15.5" fill="#fff" stroke="#aaa" stroke-width="0.5"/><path d="M5.5 17.5C7 15 9.5 13.5 12 13.5L12.5 15C11 16.5 9 17.5 5.5 17.5Z" fill="#2b6fb5"/></svg>
<div class="t f" style="left:634.7px;top:60.5px;font-size:7.8px;color:#3c3c3c;--w:36.3px;">テーブルとして</div>
<div class="t f" style="left:636.7px;top:69.5px;font-size:7.8px;color:#3c3c3c;--w:27.3px;">書式設定</div>
<svg class="a" style="left:666.5px;top:72.7px" width="5" height="3.5" viewBox="0 0 5 3.5"><path d="M0.9 0.8L2.5 2.6L4.1 0.8" fill="none" stroke="#777" stroke-width="1"/></svg>
<svg class="a" style="left:679.5px;top:40.5px" width="20" height="18" viewBox="0 0 20 18"><rect x="0.5" y="0.8" width="16" height="12.7" fill="#fff" stroke="#b4b4b4" stroke-width="0.8"/><rect x="2.5" y="3" width="12" height="8.5" fill="#b7cfea"/><path d="M18.8 4.5L12.5 11.5" stroke="#666" stroke-width="1.6"/><path d="M12.5 11L14 12.6L11.5 15.5" fill="#fff" stroke="#aaa" stroke-width="0.5"/><path d="M5.5 17.5C7 15 9.5 13.5 12 13.5L12.5 15C11 16.5 9 17.5 5.5 17.5Z" fill="#2b6fb5"/></svg>
<div class="t f" style="left:680px;top:60.5px;font-size:7.8px;color:#3c3c3c;--w:16.9px;">セルの</div>
<div class="t f" style="left:674.2px;top:69.5px;font-size:7.8px;color:#3c3c3c;--w:21.1px;">スタイル</div>
<svg class="a" style="left:697.5px;top:72.7px" width="5" height="3.5" viewBox="0 0 5 3.5"><path d="M0.9 0.8L2.5 2.6L4.1 0.8" fill="none" stroke="#777" stroke-width="1"/></svg>
<svg class="a" style="left:715.5px;top:40.5px" width="19" height="18" viewBox="0 0 19 18"><g fill="#fff" stroke="#aaa" stroke-width="0.7"><rect x="1.5" y="0.5" width="9.4" height="3.4"/><rect x="1.5" y="10.5" width="9.4" height="6.8"/></g><path d="M6.2 0.5V3.9M6.2 10.5V17.3M1.5 13.9H10.9" stroke="#aaa" stroke-width="0.7"/><rect x="8.5" y="5.5" width="9" height="3.2" fill="#a9c4e6" stroke="#7aa0cc" stroke-width="0.6"/><path d="M13 5.5V8.7" stroke="#7aa0cc" stroke-width="0.5"/><path d="M1 7.1H7M3.5 4.8L1 7.1L3.5 9.4" fill="none" stroke="#2b6fb5" stroke-width="1.3"/></svg>
<div class="t f" style="left:718px;top:60.5px;font-size:7.8px;color:#3c3c3c;--w:13.2px;">挿入</div>
<svg class="a" style="left:723.5px;top:72.2px" width="5" height="3.5" viewBox="0 0 5 3.5"><path d="M0.9 0.8L2.5 2.6L4.1 0.8" fill="none" stroke="#777" stroke-width="1"/></svg>
<svg class="a" style="left:740px;top:40.5px" width="18" height="18" viewBox="0 0 18 18"><g fill="#fff" stroke="#aaa" stroke-width="0.7"><rect x="0.5" y="0.5" width="9.4" height="3.4"/><rect x="0.5" y="10.5" width="9.4" height="6.8"/></g><path d="M5.2 0.5V3.9M5.2 10.5V17.3M0.5 13.9H9.9" stroke="#aaa" stroke-width="0.7"/><rect x="3.5" y="5.5" width="6.4" height="3.2" fill="#a9c4e6" stroke="#7aa0cc" stroke-width="0.6"/><path d="M9 3.8L17 11.5M17 3.8L9 11.5" stroke="#e0633a" stroke-width="1.4"/></svg>
<div class="t f" style="left:741.4px;top:60.5px;font-size:7.8px;color:#3c3c3c;--w:13.3px;">削除</div>
<svg class="a" style="left:745.5px;top:72.2px" width="5" height="3.5" viewBox="0 0 5 3.5"><path d="M0.9 0.8L2.5 2.6L4.1 0.8" fill="none" stroke="#777" stroke-width="1"/></svg>
<svg class="a" style="left:763px;top:40px" width="18" height="18" viewBox="0 0 18 18"><path d="M1.5 2H13.5M3.5 0.6L1.5 2L3.5 3.4M11.5 0.6L13.5 2L11.5 3.4" fill="none" stroke="#2b6fb5" stroke-width="1"/><rect x="0.7" y="4" width="16" height="11.5" fill="#fff" stroke="#999" stroke-width="0.8"/><path d="M0.7 7H16.7M0.7 12.5H16.7M4.5 4V15.5M12.5 4V15.5" stroke="#bbb" stroke-width="0.6"/><rect x="5.3" y="7" width="4.2" height="6" fill="#2b6fb5"/><path d="M1 17.3H12" stroke="#bbb" stroke-width="0.7"/></svg>
<div class="t f" style="left:765.3px;top:60.5px;font-size:7.8px;color:#3c3c3c;--w:13.6px;">書式</div>
<svg class="a" style="left:771.5px;top:72.2px" width="5" height="3.5" viewBox="0 0 5 3.5"><path d="M0.9 0.8L2.5 2.6L4.1 0.8" fill="none" stroke="#777" stroke-width="1"/></svg>
<svg class="a" style="left:794.5px;top:41px" width="7" height="8" viewBox="0 0 7 8"><path d="M6.5 1V0.6H0.8L3.6 4L0.8 7.4H6.5V7" fill="none" stroke="#444" stroke-width="1.1"/></svg>
<div class="t f" style="left:805.5px;top:42.5px;font-size:7.8px;color:#3c3c3c;--w:32.8px;">オート SUM</div>
<svg class="a" style="left:843.5px;top:45.7px" width="5" height="3.5" viewBox="0 0 5 3.5"><path d="M0.9 0.8L2.5 2.6L4.1 0.8" fill="none" stroke="#777" stroke-width="1"/></svg>
<div class="a" style="left:795px;top:53px;width:8px;height:9px;border:1px solid #777;background:#fff"></div>
<div class="a" style="left:797px;top:55px;width:4px;height:5px;background:#2b6fb5"></div>
<div class="t f" style="left:805.5px;top:54.5px;font-size:7.8px;color:#3c3c3c;--w:14px;">フィル</div>
<svg class="a" style="left:822.5px;top:56.7px" width="5" height="3.5" viewBox="0 0 5 3.5"><path d="M0.9 0.8L2.5 2.6L4.1 0.8" fill="none" stroke="#777" stroke-width="1"/></svg>
<div class="a" style="left:796px;top:68px;width:8px;height:5px;background:#e87c8a;transform:rotate(-35deg);border-radius:1px"></div>
<div class="t f" style="left:805.5px;top:67px;font-size:7.8px;color:#3c3c3c;--w:13.2px;">クリア</div>
<svg class="a" style="left:822.5px;top:69.7px" width="5" height="3.5" viewBox="0 0 5 3.5"><path d="M0.9 0.8L2.5 2.6L4.1 0.8" fill="none" stroke="#777" stroke-width="1"/></svg>
<div class="t" style="left:861px;top:40px;font-size:7.5px;color:#2b6fb5;font-weight:bold">A</div>
<div class="t" style="left:861px;top:48px;font-size:7.5px;color:#9b59b6;font-weight:bold">Z</div>
<div class="a" style="left:868px;top:44px;width:0;height:0;border-left:4.5px solid transparent;border-right:4.5px solid transparent;border-top:6px solid #555"></div>
<div class="a" style="left:871.5px;top:49px;width:2px;height:5px;background:#555"></div>
<div class="t f" style="left:854px;top:60.5px;font-size:7.8px;color:#3c3c3c;--w:28.8px;">並べ替えと</div>
<div class="t f" style="left:852.3px;top:69.5px;font-size:7.8px;color:#3c3c3c;--w:24px;">フィルター</div>
<svg class="a" style="left:880.5px;top:72.7px" width="5" height="3.5" viewBox="0 0 5 3.5"><path d="M0.9 0.8L2.5 2.6L4.1 0.8" fill="none" stroke="#777" stroke-width="1"/></svg>
<svg class="a" style="left:888.5px;top:40px" width="17" height="17" viewBox="0 0 17 17"><circle cx="10.6" cy="6.6" r="5" fill="none" stroke="#3a78c0" stroke-width="1.7"/><path d="M7.2 10L2 15.3" stroke="#3a78c0" stroke-width="2" stroke-linecap="round"/></svg>
<div class="t f" style="left:888.3px;top:60.5px;font-size:7.8px;color:#3c3c3c;--w:18px;">検索と</div>
<div class="t f" style="left:887.2px;top:69.5px;font-size:7.8px;color:#3c3c3c;--w:12.8px;">選択</div>
<svg class="a" style="left:903.5px;top:72.7px" width="5" height="3.5" viewBox="0 0 5 3.5"><path d="M0.9 0.8L2.5 2.6L4.1 0.8" fill="none" stroke="#777" stroke-width="1"/></svg>
<div class="a" style="left:136.5px;top:105px;width:0;height:0;border-left:1.8px solid transparent;border-right:1.8px solid transparent;border-top:2px solid #555"></div>
<div class="a" style="left:150px;top:103.0px;width:1px;height:1px;background:#999"></div>
<div class="a" style="left:150px;top:105.5px;width:1px;height:1px;background:#999"></div>
<div class="a" style="left:150px;top:108.0px;width:1px;height:1px;background:#999"></div>
<svg class="a" style="left:166px;top:102.5px" width="8" height="8" viewBox="0 0 8 8"><path d="M0.6 0.6L7.4 7.4M7.4 0.6L0.6 7.4" stroke="#a8a8a8" stroke-width="0.9"/></svg>
<svg class="a" style="left:187px;top:102.5px" width="8" height="7" viewBox="0 0 8 7"><path d="M0.5 3.8L2.8 6.2L7.5 0.6" fill="none" stroke="#a8a8a8" stroke-width="0.9"/></svg>
<div class="t" style="left:208px;top:101.5px;font-size:8.5px;color:#555;font-style:italic;font-family:'Liberation Serif',serif">fx</div>
<svg class="a" style="left:934.5px;top:103.2px" width="5" height="3.5" viewBox="0 0 5 3.5"><path d="M0.9 0.8L2.5 2.6L4.1 0.8" fill="none" stroke="#555" stroke-width="1"/></svg>
<div class="a" style="left:96.65px;top:133.30px;width:278.75px;height:13.79px;background:#d9e1f2"></div>
<div class="t" style="left:96.65px;width:39.85px;top:135.50px;font-size:8.4px;color:#404040;text-align:left;padding:0 2px">NO.</div>
<div class="t" style="left:136.50px;width:39.05px;top:135.50px;font-size:8.4px;color:#404040;text-align:left;padding:0 2px"><i class="k">名</i><i class="k">前</i></div>
<div class="t" style="left:175.55px;width:39.85px;top:135.50px;font-size:8.4px;color:#404040;text-align:left;padding:0 2px"><i class="k">性</i><i class="k">別</i></div>
<div class="t" style="left:215.40px;width:40.15px;top:135.50px;font-size:8.4px;color:#404040;text-align:left;padding:0 2px"><i class="k">国</i><i class="k">語</i></div>
<div class="t" style="left:255.55px;width:39.80px;top:135.50px;font-size:8.4px;color:#404040;text-align:left;padding:0 2px"><i class="k">英</i><i class="k">語</i></div>
<div class="t" style="left:295.35px;width:40.15px;top:135.50px;font-size:8.4px;color:#404040;text-align:left;padding:0 2px"><i class="k">数</i><i class="k">学</i></div>
<div class="t" style="left:335.50px;width:39.90px;top:135.50px;font-size:8.4px;color:#404040;text-align:left;padding:0 2px"><i class="k">合</i><i class="k">計</i></div>
<div class="t" style="left:96.65px;width:39.85px;top:150.29px;font-size:8.4px;color:#404040;text-align:right;padding:0 2px">1</div>
<div class="t" style="left:136.50px;width:39.05px;top:150.29px;font-size:8.4px;color:#404040;text-align:left;padding:0 2px"><i class="k">佐</i><i class="k">藤</i></div>
<div class="t" style="left:175.55px;width:39.85px;top:150.29px;font-size:8.4px;color:#404040;text-align:left;padding:0 2px"><i class="k">女</i><i class="k">性</i></div>
<div class="t" style="left:215.40px;width:40.15px;top:150.29px;font-size:8.4px;color:#404040;text-align:right;padding:0 2px">100</div>
<div class="t" style="left:255.55px;width:39.80px;top:150.29px;font-size:8.4px;color:#404040;text-align:right;padding:0 2px">100</div>
<div class="t" style="left:295.35px;width:40.15px;top:150.29px;font-size:8.4px;color:#404040;text-align:right;padding:0 2px">90</div>
<div class="t" style="left:335.50px;width:39.90px;top:150.29px;font-size:8.4px;color:#404040;text-align:right;padding:0 2px">290</div>
<div class="t" style="left:96.65px;width:39.85px;top:164.08px;font-size:8.4px;color:#404040;text-align:right;padding:0 2px">2</div>
<div class="t" style="left:136.50px;width:39.05px;top:164.08px;font-size:8.4px;color:#404040;text-align:left;padding:0 2px"><i class="k">鈴</i><i class="k">木</i></div>
<div class="t" style="left:175.55px;width:39.85px;top:164.08px;font-size:8.4px;color:#404040;text-align:left;padding:0 2px"><i class="k">男</i><i class="k">性</i></div>
<div class="t" style="left:215.40px;width:40.15px;top:164.08px;font-size:8.4px;color:#404040;text-align:right;padding:0 2px">95</div>
<div class="t" style="left:255.55px;width:39.80px;top:164.08px;font-size:8.4px;color:#404040;text-align:right;padding:0 2px">90</div>
<div class="t" style="left:295.35px;width:40.15px;top:164.08px;font-size:8.4px;color:#404040;text-align:right;padding:0 2px">85</div>
<div class="t" style="left:335.50px;width:39.90px;top:164.08px;font-size:8.4px;color:#404040;text-align:right;padding:0 2px">270</div>
<div class="t" style="left:96.65px;width:39.85px;top:177.87px;font-size:8.4px;color:#404040;text-align:right;padding:0 2px">3</div>
<div class="t" style="left:136.50px;width:39.05px;top:177.87px;font-size:8.4px;color:#404040;text-align:left;padding:0 2px"><i class="k">高</i><i class="k">橋</i></div>
<div class="t" style="left:175.55px;width:39.85px;top:177.87px;font-size:8.4px;color:#404040;text-align:left;padding:0 2px"><i class="k">女</i><i class="k">性</i></div>
<div class="t" style="left:215.40px;width:40.15px;top:177.87px;font-size:8.4px;color:#404040;text-align:right;padding:0 2px">90</div>
<div class="t" style="left:255.55px;width:39.80px;top:177.87px;font-size:8.4px;color:#404040;text-align:right;padding:0 2px">85</div>
<div class="t" style="left:295.35px;width:40.15px;top:177.87px;font-size:8.4px;color:#404040;text-align:right;padding:0 2px">80</div>
<div class="t" style="left:335.50px;width:39.90px;top:177.87px;font-size:8.4px;color:#404040;text-align:right;padding:0 2px">255</div>
<div class="t" style="left:96.65px;width:39.85px;top:191.66px;font-size:8.4px;color:#404040;text-align:right;padding:0 2px">4</div>
<div class="t" style="left:136.50px;width:39.05px;top:191.66px;font-size:8.4px;color:#404040;text-align:left;padding:0 2px"><i class="k">田</i><i class="k">中</i></div>
<div class="t" style="left:175.55px;width:39.85px;top:191.66px;font-size:8.4px;color:#404040;text-align:left;padding:0 2px"><i class="k">男</i><i class="k">性</i></div>
<div class="t" style="left:215.40px;width:40.15px;top:191.66px;font-size:8.4px;color:#404040;text-align:right;padding:0 2px">70</div>
<div class="t" style="left:255.55px;width:39.80px;top:191.66px;font-size:8.4px;color:#404040;text-align:right;padding:0 2px">80</div>
<div class="t" style="left:295.35px;width:40.15px;top:191.66px;font-size:8.4px;color:#404040;text-align:right;padding:0 2px">75</div>
<div class="t" style="left:335.50px;width:39.90px;top:191.66px;font-size:8.4px;color:#404040;text-align:right;padding:0 2px">225</div>
<div class="t" style="left:96.65px;width:39.85px;top:205.45px;font-size:8.4px;color:#404040;text-align:right;padding:0 2px">5</div>
<div class="t" style="left:136.50px;width:39.05px;top:205.45px;font-size:8.4px;color:#404040;text-align:left;padding:0 2px"><i class="k">伊</i><i class="k">藤</i></div>
<div class="t" style="left:175.55px;width:39.85px;top:205.45px;font-size:8.4px;color:#404040;text-align:left;padding:0 2px"><i class="k">男</i><i class="k">性</i></div>
<div class="t" style="left:215.40px;width:40.15px;top:205.45px;font-size:8.4px;color:#404040;text-align:left;padding:0 2px"><i class="k">欠</i></div>
<div class="t" style="left:295.35px;width:40.15px;top:205.45px;font-size:8.4px;color:#404040;text-align:right;padding:0 2px">75</div>
<div class="t" style="left:335.50px;width:39.90px;top:205.45px;font-size:8.4px;color:#404040;text-align:right;padding:0 2px">75</div>
<div class="t" style="left:96.65px;width:39.85px;top:219.24px;font-size:8.4px;color:#404040;text-align:right;padding:0 2px">6</div>
<div class="t" style="left:136.50px;width:39.05px;top:219.24px;font-size:8.4px;color:#404040;text-align:left;padding:0 2px"><i class="k">渡</i><i class="k">辺</i></div>
<div class="t" style="left:175.55px;width:39.85px;top:219.24px;font-size:8.4px;color:#404040;text-align:left;padding:0 2px"><i class="k">女</i><i class="k">性</i></div>
<div class="t" style="left:215.40px;width:40.15px;top:219.24px;font-size:8.4px;color:#404040;text-align:right;padding:0 2px">60</div>
<div class="t" style="left:255.55px;width:39.80px;top:219.24px;font-size:8.4px;color:#404040;text-align:right;padding:0 2px">70</div>
<div class="t" style="left:295.35px;width:40.15px;top:219.24px;font-size:8.4px;color:#404040;text-align:right;padding:0 2px">90</div>
<div class="t" style="left:335.50px;width:39.90px;top:219.24px;font-size:8.4px;color:#404040;text-align:right;padding:0 2px">220</div>
<div class="t" style="left:96.65px;width:39.85px;top:233.03px;font-size:8.4px;color:#404040;text-align:right;padding:0 2px">7</div>
<div class="t" style="left:136.50px;width:39.05px;top:233.03px;font-size:8.4px;color:#404040;text-align:left;padding:0 2px"><i class="k">山</i><i class="k">本</i></div>
<div class="t" style="left:175.55px;width:39.85px;top:233.03px;font-size:8.4px;color:#404040;text-align:left;padding:0 2px"><i class="k">女</i><i class="k">性</i></div>
<div class="t" style="left:215.40px;width:40.15px;top:233.03px;font-size:8.4px;color:#404040;text-align:right;padding:0 2px">63</div>
<div class="t" style="left:255.55px;width:39.80px;top:233.03px;font-size:8.4px;color:#404040;text-align:right;padding:0 2px">55</div>
<div class="t" style="left:295.35px;width:40.15px;top:233.03px;font-size:8.4px;color:#404040;text-align:right;padding:0 2px">85</div>
<div class="t" style="left:335.50px;width:39.90px;top:233.03px;font-size:8.4px;color:#404040;text-align:right;padding:0 2px">203</div>
<div class="t" style="left:96.65px;width:39.85px;top:246.82px;font-size:8.4px;color:#404040;text-align:right;padding:0 2px">8</div>
<div class="t" style="left:136.50px;width:39.05px;top:246.82px;font-size:8.4px;color:#404040;text-align:left;padding:0 2px"><i class="k">中</i><i class="k">村</i></div>
<div class="t" style="left:175.55px;width:39.85px;top:246.82px;font-size:8.4px;color:#404040;text-align:left;padding:0 2px"><i class="k">男</i><i class="k">性</i></div>
<div class="t" style="left:215.40px;width:40.15px;top:246.82px;font-size:8.4px;color:#404040;text-align:right;padding:0 2px">47</div>
<div class="t" style="left:255.55px;width:39.80px;top:246.82px;font-size:8.4px;color:#404040;text-align:right;padding:0 2px">70</div>
<div class="t" style="left:295.35px;width:40.15px;top:246.82px;font-size:8.4px;color:#404040;text-align:right;padding:0 2px">60</div>
<div class="t" style="left:335.50px;width:39.90px;top:246.82px;font-size:8.4px;color:#404040;text-align:right;padding:0 2px">177</div>
<div class="t" style="left:96.65px;width:39.85px;top:260.61px;font-size:8.4px;color:#404040;text-align:right;padding:0 2px">9</div>
<div class="t" style="left:136.50px;width:39.05px;top:260.61px;font-size:8.4px;color:#404040;text-align:left;padding:0 2px"><i class="k">小</i><i class="k">林</i></div>
<div class="t" style="left:175.55px;width:39.85px;top:260.61px;font-size:8.4px;color:#404040;text-align:left;padding:0 2px"><i class="k">男</i><i class="k">性</i></div>
<div class="t" style="left:215.40px;width:40.15px;top:260.61px;font-size:8.4px;color:#404040;text-align:right;padding:0 2px">55</div>
<div class="t" style="left:255.55px;width:39.80px;top:260.61px;font-size:8.4px;color:#404040;text-align:right;padding:0 2px">80</div>
<div class="t" style="left:295.35px;width:40.15px;top:260.61px;font-size:8.4px;color:#404040;text-align:right;padding:0 2px">70</div>
<div class="t" style="left:335.50px;width:39.90px;top:260.61px;font-size:8.4px;color:#404040;text-align:right;padding:0 2px">205</div>
<div class="t" style="left:96.65px;width:39.85px;top:274.40px;font-size:8.4px;color:#404040;text-align:right;padding:0 2px">10</div>
<div class="t" style="left:136.50px;width:39.05px;top:274.40px;font-size:8.4px;color:#404040;text-align:left;padding:0 2px"><i class="k">加</i><i class="k">藤</i></div>
<div class="t" style="left:175.55px;width:39.85px;top:274.40px;font-size:8.4px;color:#404040;text-align:left;padding:0 2px"><i class="k">女</i><i class="k">性</i></div>
<div class="t" style="left:215.40px;width:40.15px;top:274.40px;font-size:8.4px;color:#404040;text-align:right;padding:0 2px">60</div>
<div class="t" style="left:255.55px;width:39.80px;top:274.40px;font-size:8.4px;color:#404040;text-align:right;padding:0 2px">55</div>
<div class="t" style="left:295.35px;width:40.15px;top:274.40px;font-size:8.4px;color:#404040;text-align:right;padding:0 2px">85</div>
<div class="t" style="left:335.50px;width:39.90px;top:274.40px;font-size:8.4px;color:#404040;text-align:right;padding:0 2px">200</div>
<div class="a" style="left:96.15px;top:146.59px;width:279.75px;height:1px;background:#6a6a6a"></div>
<div class="a" style="left:96.15px;top:160.38px;width:279.75px;height:1px;background:#6a6a6a"></div>
<div class="a" style="left:96.15px;top:174.17px;width:279.75px;height:1px;background:#6a6a6a"></div>
<div class="a" style="left:96.15px;top:187.96px;width:279.75px;height:1px;background:#6a6a6a"></div>
<div class="a" style="left:96.15px;top:201.75px;width:279.75px;height:1px;background:#6a6a6a"></div>
<div class="a" style="left:96.15px;top:215.54px;width:279.75px;height:1px;background:#6a6a6a"></div>
<div class="a" style="left:96.15px;top:229.33px;width:279.75px;height:1px;background:#6a6a6a"></div>
<div class="a" style="left:96.15px;top:243.12px;width:279.75px;height:1px;background:#6a6a6a"></div>
<div class="a" style="left:96.15px;top:256.91px;width:279.75px;height:1px;background:#6a6a6a"></div>
<div class="a" style="left:96.15px;top:270.70px;width:279.75px;height:1px;background:#6a6a6a"></div>
<div class="a" style="left:96.15px;top:284.49px;width:279.75px;height:1px;background:#6a6a6a"></div>
<div class="a" style="left:136.00px;top:132.80px;width:1px;height:152.69px;background:#6a6a6a"></div>
<div class="a" style="left:175.05px;top:132.80px;width:1px;height:152.69px;background:#6a6a6a"></div>
<div class="a" style="left:214.90px;top:132.80px;width:1px;height:152.69px;background:#6a6a6a"></div>
<div class="a" style="left:255.05px;top:132.80px;width:1px;height:152.69px;background:#6a6a6a"></div>
<div class="a" style="left:294.85px;top:132.80px;width:1px;height:152.69px;background:#6a6a6a"></div>
<div class="a" style="left:335.00px;top:132.80px;width:1px;height:152.69px;background:#6a6a6a"></div>
<div class="a" style="left:374.90px;top:132.80px;width:1px;height:152.69px;background:#6a6a6a"></div>
<div class="a" style="left:454.50px;top:133.30px;width:119.80px;height:13.79px;background:#e2efda"></div>
<div class="a" style="left:454.50px;top:160.88px;width:80.10px;height:13.79px;background:#d9e1f2"></div>
<div class="a" style="left:454.50px;top:174.67px;width:80.10px;height:13.79px;background:#fce4d6"></div>
<div class="a" style="left:454.50px;top:216.04px;width:119.80px;height:13.79px;background:#ededed"></div>
<div class="a" style="left:454.50px;top:229.83px;width:80.10px;height:13.79px;background:#fff2cc"></div>
<div class="a" style="left:454.00px;top:146.59px;width:120.80px;height:1px;background:#6a6a6a"></div>
<div class="a" style="left:454.00px;top:160.38px;width:120.80px;height:1px;background:#6a6a6a"></div>
<div class="a" style="left:454.00px;top:174.17px;width:120.80px;height:1px;background:#6a6a6a"></div>
<div class="a" style="left:454.00px;top:187.96px;width:120.80px;height:1px;background:#6a6a6a"></div>
<div class="a" style="left:454.00px;top:132.80px;width:1px;height:56.16px;background:#6a6a6a"></div>
<div class="a" style="left:573.80px;top:132.80px;width:1px;height:56.16px;background:#6a6a6a"></div>
<div class="a" style="left:534.10px;top:160.38px;width:1px;height:28.58px;background:#6a6a6a"></div>
<div class="a" style="left:493.90px;top:174.17px;width:1px;height:14.79px;background:#6a6a6a"></div>
<div class="t" style="left:454.50px;width:119.80px;top:135.50px;font-size:8.4px;color:#404040;text-align:center;padding:0 2px">AVERAGEIFS<i class="k">関</i><i class="k">数</i></div>
<div class="t" style="left:454.50px;width:119.80px;top:150.29px;font-size:8.4px;color:#404040;text-align:center;padding:0 2px"><i class="k">数</i><i class="k">学</i><i class="k">　</i><i class="k">平</i><i class="k">均</i></div>
<div class="t" style="left:454.50px;width:80.10px;top:164.08px;font-size:8.4px;color:#404040;text-align:center;padding:0 2px"><i class="k">男</i><i class="k">性</i>80<i class="k">点</i><i class="k">以</i><i class="k">上</i></div>
<div class="t" style="left:534.60px;width:39.70px;top:164.08px;font-size:8.4px;color:#404040;text-align:right;padding:0 2px">85</div>
<div class="t" style="left:454.50px;width:39.90px;top:177.87px;font-size:8.4px;color:#404040;text-align:left;padding:0 2px"><i class="k">女</i><i class="k">性</i></div>
<div class="t" style="left:494.40px;width:40.20px;top:177.87px;font-size:8.4px;color:#404040;text-align:left;padding:0 2px">&gt;=80</div>
<div class="a" style="left:454.00px;top:201.75px;width:120.80px;height:1px;background:#6a6a6a"></div>
<div class="a" style="left:454.00px;top:215.54px;width:120.80px;height:1px;background:#6a6a6a"></div>
<div class="a" style="left:454.00px;top:229.33px;width:120.80px;height:1px;background:#6a6a6a"></div>
<div class="a" style="left:454.00px;top:243.12px;width:120.80px;height:1px;background:#6a6a6a"></div>
<div class="a" style="left:454.00px;top:201.75px;width:1px;height:42.37px;background:#6a6a6a"></div>
<div class="a" style="left:573.80px;top:201.75px;width:1px;height:42.37px;background:#6a6a6a"></div>
<div class="a" style="left:493.90px;top:229.33px;width:1px;height:14.79px;background:#6a6a6a"></div>
<div class="a" style="left:534.10px;top:229.33px;width:1px;height:14.79px;background:#6a6a6a"></div>
<div class="t" style="left:454.50px;width:119.80px;top:205.45px;font-size:8.4px;color:#404040;text-align:center;padding:0 2px"><i class="k">数</i><i class="k">学</i><i class="k">　</i><i class="k">平</i><i class="k">均</i></div>
<div class="t" style="left:454.50px;width:119.80px;top:219.24px;font-size:8.4px;color:#404040;text-align:center;padding:0 2px">70<i class="k">点</i><i class="k">以</i><i class="k">上</i>80<i class="k">点</i><i class="k">以</i><i class="k">下</i></div>
<div class="t" style="left:454.50px;width:39.90px;top:233.03px;font-size:8.4px;color:#404040;text-align:left;padding:0 2px">&gt;=70</div>
<div class="t" style="left:494.40px;width:40.20px;top:233.03px;font-size:8.4px;color:#404040;text-align:left;padding:0 2px">&lt;=80</div>
<div class="a" style="left:613.85px;top:146.59px;width:80.40px;height:1px;background:#6a6a6a"></div>
<div class="a" style="left:613.85px;top:160.38px;width:80.40px;height:1px;background:#6a6a6a"></div>
<div class="a" style="left:613.85px;top:174.17px;width:80.40px;height:1px;background:#6a6a6a"></div>
<div class="a" style="left:613.85px;top:132.80px;width:1px;height:42.37px;background:#6a6a6a"></div>
<div class="a" style="left:693.25px;top:132.80px;width:1px;height:42.37px;background:#6a6a6a"></div>
<div class="a" style="left:653.40px;top:146.59px;width:1px;height:28.58px;background:#6a6a6a"></div>
<div class="t" style="left:614.35px;width:79.40px;top:135.50px;font-size:8.4px;color:#404040;text-align:center;padding:0 2px"><i class="k">不</i><i class="k">等</i><i class="k">号</i><i class="k">の</i><i class="k">意</i><i class="k">味</i></div>
<div class="t" style="left:614.35px;width:39.55px;top:150.29px;font-size:8.4px;color:#404040;text-align:left;padding:0 2px">70<i class="k">以</i><i class="k">上</i></div>
<div class="t" style="left:653.90px;width:39.85px;top:150.29px;font-size:8.4px;color:#404040;text-align:left;padding:0 2px">&gt;=70</div>
<div class="t" style="left:614.35px;width:39.55px;top:164.08px;font-size:8.4px;color:#404040;text-align:left;padding:0 2px">80<i class="k">以</i><i class="k">下</i></div>
<div class="t" style="left:653.90px;width:39.85px;top:164.08px;font-size:8.4px;color:#404040;text-align:left;padding:0 2px">&lt;=80</div>
<div class="a" style="left:533.60px;top:173.67px;width:41.70px;height:15.79px;border:1.6px solid #217346"></div>
<div class="a" style="left:572.30px;top:186.46px;width:3px;height:3px;background:#217346"></div>
<div class="a" style="left:534.60px;top:120px;width:39.70px;height:13.5px;background:#d4d4d4;border-bottom:1.5px solid #5f9474"></div>
<div class="t" style="left:534.60px;width:39.70px;text-align:center;top:123px;font-size:8.5px;color:#4f8463">L</div>
<div class="a" style="left:80px;top:174.67px;width:16.5px;height:13.79px;background:#d4d4d4;border-right:1.6px solid #6a9a80"></div>
<div class="t" style="left:80px;width:16px;text-align:center;top:177.67px;font-size:8.5px;color:#4f8463">4</div>
<svg class="a" style="left:440px;top:160px" width="110" height="40" viewBox="440 160 110 40"><path fill-rule="evenodd" fill="#ff0000" d="M447.7 168.9H490.4V194.8H447.7Z M450.9 172.3V190.9H487V172.3Z M490.4 168.9H539.7V194.8H490.4Z M493.8 172.3V190.9H536.3V172.3Z"/></svg>
<svg class="a" style="left:84px;top:121px" width="12" height="11" viewBox="0 0 12 11"><path d="M11.4 0.3V10.7H0.6Z" fill="#bdbdbd"/></svg>
<div class="a" style="left:434.8px;top:262.4px;width:14.3px;height:14.3px;border-radius:50%;background:#f07a78"></div>
<svg class="a" style="left:437.4px;top:265px" width="9" height="9" viewBox="0 0 9 9"><path d="M3 0.5H6V3H8.5V6H6V8.5H3V6H0.5V3H3Z" fill="#fff" stroke="#333" stroke-width="0.8"/></svg>
<div class="a" style="left:933px;top:120px;width:11px;height:408px;background:#e6e6e6"></div>
<div class="a" style="left:933.5px;top:120.5px;width:9px;height:9px;background:#fff"></div>
<div class="a" style="left:936px;top:124px;width:0;height:0;border-left:2.5px solid transparent;border-right:2.5px solid transparent;border-bottom:3px solid #555"></div>
<div class="a" style="left:933.5px;top:130px;width:9px;height:375px;background:#fff;border:1px solid #d8d8d8"></div>
<div class="a" style="left:933.5px;top:519.5px;width:9px;height:9px;background:#fff"></div>
<div class="a" style="left:936px;top:523px;width:0;height:0;border-left:2.5px solid transparent;border-right:2.5px solid transparent;border-top:3px solid #555"></div>
<div class="a" style="left:80px;top:528px;width:864px;height:12px;background:#e6e6e6;border-top:1px solid #c8c8c8"></div>
<svg class="a" style="left:92.5px;top:531.5px" width="3" height="5" viewBox="0 0 3 5"><path d="M2.5 0.4L0.5 2.5L2.5 4.6" fill="none" stroke="#aaa" stroke-width="0.8"/></svg>
<svg class="a" style="left:103.5px;top:531.5px" width="3" height="5" viewBox="0 0 3 5"><path d="M0.5 0.4L2.5 2.5L0.5 4.6" fill="none" stroke="#aaa" stroke-width="0.8"/></svg>
<div class="a" style="left:121.75px;top:527px;width:37.5px;height:13px;background:#fff;border-bottom:1.5px solid #217346;box-shadow:1px 0 1px #bbb"></div>
<div class="t f" style="left:126.9px;top:530px;font-size:8.6px;color:#217346;--w:26px;">Sheet1</div>
<div class="a" style="left:173px;top:530px;width:8px;height:8px;border:1px solid #bbb;border-radius:50%"></div>
<div class="t" style="left:174.5px;top:529.5px;font-size:8px;color:#bbb">+</div>
<div class="a" style="left:596.5px;top:531.0px;width:1px;height:1px;background:#999"></div>
<div class="a" style="left:596.5px;top:533.5px;width:1px;height:1px;background:#999"></div>
<div class="a" style="left:596.5px;top:536.0px;width:1px;height:1px;background:#999"></div>
<div class="a" style="left:604px;top:529.5px;width:9px;height:9.5px;background:#fff"></div>
<div class="a" style="left:606.5px;top:532px;width:0;height:0;border-top:2.5px solid transparent;border-bottom:2.5px solid transparent;border-right:3px solid #555"></div>
<div class="a" style="left:613px;top:529.5px;width:294px;height:9.5px;background:#fff;border:1px solid #d8d8d8"></div>
<div class="a" style="left:924px;top:529.5px;width:9px;height:9.5px;background:#fff"></div>
<div class="a" style="left:927.5px;top:532px;width:0;height:0;border-top:2.5px solid transparent;border-bottom:2.5px solid transparent;border-left:3px solid #555"></div>
<div class="a" style="left:80px;top:540px;width:864px;height:13px;background:#f3f3f3"></div>
<div class="t f" style="left:84.2px;top:543px;font-size:7.6px;color:#555;--w:27px;">準備完了</div>
<div class="a" style="left:721px;top:543px;width:8px;height:6px;border:1px solid #666"></div>
<div class="a" style="left:725px;top:547px;width:4px;height:4px;background:#666;border-radius:50%"></div>
<div class="t f" style="left:731px;top:543px;font-size:7.6px;color:#555;--w:27px;">表示設定</div>
<div class="a" style="left:769px;top:540px;width:23px;height:13px;background:#d4d4d4"></div>
<div class="a" style="left:776px;top:543px;width:8px;height:7px;border:1px solid #666;background:#fff"></div>
<div class="a" style="left:776px;top:545.3px;width:8px;height:1px;background:#666"></div>
<div class="a" style="left:776px;top:547.7px;width:8px;height:1px;background:#666"></div>
<div class="a" style="left:778.7px;top:543px;width:1px;height:7px;background:#666"></div>
<div class="a" style="left:781.3px;top:543px;width:1px;height:7px;background:#666"></div>
<div class="a" style="left:799px;top:543px;width:9px;height:7px;border:1px solid #666"></div>
<div class="a" style="left:801px;top:544px;width:5px;height:5px;border:1px solid #666"></div>
<div class="a" style="left:822px;top:543px;width:8px;height:7px;border:1px solid #666"></div>
<div class="a" style="left:825px;top:543px;width:1px;height:3px;background:#666"></div>
<div class="a" style="left:841.5px;top:546.5px;width:4px;height:1px;background:#888"></div>
<div class="a" style="left:849px;top:546.5px;width:56px;height:1px;background:#888"></div>
<div class="a" style="left:875px;top:543.5px;width:3px;height:6px;background:#555"></div>
<div class="t" style="left:908px;top:542.3px;font-size:8px;color:#888;">+</div>
<div class="t" style="left:920px;top:543px;font-size:8px;color:#555;">100%</div>
<div class="a" style="left:80px;top:553px;width:864px;height:23px;background:#1e3442"></div>
<svg class="a" style="left:88.5px;top:559px" width="11" height="11" viewBox="0 0 11 11"><path d="M0.3 1.6L4.6 1V5H0.3Z M5.4 0.9L10.3 0.2V5H5.4Z M0.3 5.8H4.6V9.8L0.3 9.2Z M5.4 5.8H10.3V10.6L5.4 9.9Z" fill="#fff"/></svg>
<div class="a" style="left:107.5px;top:553px;width:197.5px;height:23px;background:#f2f2f2;border-top:1px solid #d0d0d0"></div>
<svg class="a" style="left:114px;top:558px" width="11" height="11" viewBox="0 0 11 11"><circle cx="6.5" cy="4.3" r="3.3" fill="none" stroke="#333" stroke-width="1.1"/><path d="M4.2 6.6L1 9.8" stroke="#333" stroke-width="1.2"/></svg>
<div class="t f" style="left:130.2px;top:560.5px;font-size:8.6px;color:#303030;--w:66px;">ここに入力して検索</div>
<div class="a" style="left:314.6px;top:561px;width:8.8px;height:8.8px;border:1.5px solid #fff;border-radius:50%"></div>
<svg class="a" style="left:341px;top:560px" width="11" height="10" viewBox="0 0 11 10"><path d="M0.5 0.5H7.5M0.5 9.5H7.5" stroke="#ccc" stroke-width="0.9"/><rect x="1.3" y="2.2" width="5.4" height="5.6" fill="none" stroke="#ccc" stroke-width="1"/><path d="M9.5 0.3V3.5M9.5 4.3V6M9.5 6.8V9.7" stroke="#ccc" stroke-width="1"/></svg>
<svg class="a" style="left:368px;top:559px" width="14" height="11" viewBox="0 0 14 11"><path d="M0.5 1.2H5L6.2 2.3H13.5V10.5H0.5Z" fill="#f0b429"/><path d="M0.5 3.2H13.5V10.5H0.5Z" fill="#ffd45a"/><path d="M4 6.3H10V10.5H8.6V7.7H5.4V10.5H4Z" fill="#2a84d2"/></svg>
<svg class="a" style="left:394.4px;top:558.5px" width="13" height="11.5" viewBox="0 0 13 11.5"><defs><linearGradient id="pg" x1="0" y1="0" x2="1" y2="1"><stop offset="0" stop-color="#3a9be8"/><stop offset="1" stop-color="#1b4fa8"/></linearGradient></defs><rect width="13" height="11.5" fill="url(#pg)"/><path d="M0 11.5V8L4.5 4L9 8.5L13 6.5V11.5Z" fill="#143f8a"/><path d="M0 9L4.5 4.8L8 8" fill="none" stroke="#6fb3f0" stroke-width="0.6"/><circle cx="9.6" cy="2.8" r="1.1" fill="#fff"/></svg>
<svg class="a" style="left:419.8px;top:557.5px" width="14.2" height="14" viewBox="0 0 14.2 14"><path d="M4.5 3.5V1.6A1 1 0 0 1 5.5 0.6H8.7A1 1 0 0 1 9.7 1.6V3.5" fill="none" stroke="#fff" stroke-width="1.1"/><rect x="0.3" y="3.4" width="13.6" height="10.4" fill="#fff"/><rect x="5" y="6.2" width="2" height="2" fill="#f25022"/><rect x="7.3" y="6.2" width="2" height="2" fill="#7fba00"/><rect x="5" y="8.5" width="2" height="2" fill="#00a4ef"/><rect x="7.3" y="8.5" width="2" height="2" fill="#ffb900"/></svg>
<svg class="a" style="left:445.6px;top:557.6px" width="14.5" height="13.5" viewBox="0 0 14.5 13.5"><defs><linearGradient id="eg" x1="0" y1="1" x2="1" y2="0"><stop offset="0" stop-color="#0c59a4"/><stop offset="0.5" stop-color="#1a9fe0"/><stop offset="1" stop-color="#58d07a"/></linearGradient></defs><path d="M7.2 0.2A6.8 6.6 0 1 1 2 11.5A5 5 0 0 0 9 9.5C6.5 9.8 4.5 8.5 4.8 6.5C5 5 6.8 4.2 8.5 4.6C10.5 5 11.6 6.5 12 8A6 6 0 0 0 7.2 0.2Z" fill="url(#eg)"/><path d="M7.2 0.2A6.7 6.6 0 0 0 0.4 7C0.6 4.5 2.8 3 5.2 3C8.5 3 11.5 5 12 8A6.6 6.6 0 0 0 7.2 0.2Z" fill="#3cc0e8"/><path d="M0.4 7A6.8 6.6 0 0 0 2 11.5A5 5 0 0 0 5.5 12.6" fill="#1570c0"/></svg>
<svg class="a" style="left:472px;top:557px" width="14" height="13" viewBox="0 0 14 13"><path d="M4 0.5L13.5 2L11 12.5L0.5 11Z" fill="#cfe3f3"/><path d="M4 0.5L13.5 2L13 3.5L3.7 2Z" fill="#5b8fc2"/><path d="M2 9L11.5 10.5" stroke="#8fb5d8" stroke-width="0.6"/></svg>
<div class="a" style="left:469px;top:574.5px;width:17px;height:1.5px;background:#9cc3dc"></div>
<div class="a" style="left:498.1px;top:557.7px;width:13.5px;height:13.3px;border-radius:50%;background:#ffee00"></div>
<div class="a" style="left:494.7px;top:574.5px;width:20.3px;height:1.5px;background:#9cc3dc"></div>
<svg class="a" style="left:524.5px;top:557.3px" width="13" height="14" viewBox="0 0 13 14"><path d="M6 0.5L7.6 4.6L12 4.9L8.6 7.6L9.8 12L6 9.5L2.2 12L3.4 7.6L0 4.9L4.4 4.6Z" fill="#9fb0e8"/><path d="M6 0.5L7.6 4.6L12 4.9L8.6 7.6L9.8 12L6 9.5Z" fill="#7a8fd6"/><path d="M6.5 5.5V13L8.3 11.3L9.5 13.8L10.6 13.3L9.4 10.8H11.8Z" fill="#fff" stroke="#444" stroke-width="0.4"/></svg>
<svg class="a" style="left:549px;top:557.7px" width="14.2" height="12.6" viewBox="0 0 14.2 12.6"><path d="M0 4.5L7.1 0L14.2 4.5V12.6H0Z" fill="#1f8fe0"/><path d="M0 4.5L7.1 9L14.2 4.5V12.6H0Z" fill="#2aa3f0"/><path d="M0 4.5L7.1 9L14.2 4.5" fill="none" stroke="#e8f4fc" stroke-width="0.9"/><path d="M0 12.6L5.5 8M14.2 12.6L8.7 8" stroke="#1170c0" stroke-width="0.5"/></svg>
<svg class="a" style="left:575px;top:557.5px" width="13.5" height="13" viewBox="0 0 13.5 13"><rect x="0" y="0" width="13.5" height="13" rx="2" fill="#0f2a44"/><path d="M4.5 7.5L7.5 4.5M6 2.8L9 2.6L8.8 5.5" stroke="#47c7c0" stroke-width="1.6" fill="none"/><path d="M1 10H12.5L11.5 12.6H2Z" fill="#f2f2f2"/><rect x="5" y="10.6" width="3.5" height="1" fill="#444"/></svg>
<div class="a" style="left:572px;top:574.5px;width:20.3px;height:1.5px;background:#9cc3dc"></div>
<div class="a" style="left:595.5px;top:553px;width:24.2px;height:23px;background:#3b4c59"></div>
<svg class="a" style="left:600px;top:557.7px" width="14.2" height="12.5" viewBox="0 0 14.2 12.5"><rect x="4" y="0" width="10.2" height="12.5" rx="1" fill="#21a366"/><rect x="4" y="3.1" width="10.2" height="3.1" fill="#107c41"/><rect x="4" y="6.2" width="10.2" height="3.2" fill="#185c37"/><rect x="0" y="2.3" width="7.8" height="7.8" rx="0.8" fill="#107c41"/><path d="M2.2 4.2L5.6 8.3M5.6 4.2L2.2 8.3" stroke="#fff" stroke-width="1"/></svg>
<div class="a" style="left:596.2px;top:574.5px;width:23.5px;height:1.5px;background:#9cc3dc"></div>
<svg class="a" style="left:626px;top:557.7px" width="14.5" height="13" viewBox="0 0 14.5 13"><rect x="0" y="0.8" width="10.5" height="8.4" rx="2" fill="#3aa9d0"/><path d="M10.5 3.5L14.5 1.3V8.7L10.5 6.5Z" fill="#3aa9d0"/><circle cx="5.2" cy="5" r="2.4" fill="#ef3f4a"/><circle cx="5.2" cy="5" r="3" fill="none" stroke="#d0eef8" stroke-width="0.6"/><path d="M5.2 9.2V11.5M3 12.3H7.4" stroke="#3aa9d0" stroke-width="0.9"/></svg>
<div class="a" style="left:623.6px;top:574.5px;width:20.3px;height:1.5px;background:#9cc3dc"></div>
<div class="a" style="left:663px;top:558px;width:9px;height:9px;background:#f5b83d;border-radius:50%"></div>
<div class="a" style="left:662px;top:563px;width:12px;height:6px;background:#e8eef5;border-radius:3px"></div>
<div class="t" style="left:680px;top:561px;font-size:7.8px;color:#fff;">11°C</div>
<svg class="a" style="left:821px;top:559px" width="7" height="8" viewBox="0 0 7 8"><path d="M1.2 6.8L5.8 1.2" stroke="#ccc" stroke-width="0.9"/><rect x="3.5" y="0.4" width="3" height="3.6" rx="1.2" fill="none" stroke="#ccc" stroke-width="0.8" transform="rotate(40 5 2.2)"/><rect x="0.5" y="4" width="3" height="3.6" rx="1.2" fill="none" stroke="#ccc" stroke-width="0.8" transform="rotate(40 2 5.8)"/></svg>
<div class="t" style="left:840px;top:558px;font-size:9px;color:#fff;font-family:'Liberation Serif',serif">A</div>
<div class="a" style="left:855px;top:559px;width:7px;height:7px;background:#1e78d6;border-radius:50%"></div>
<div class="a" style="left:859px;top:563px;width:4px;height:4px;background:#e85a2a;border-radius:50%"></div>
<div class="t" style="left:884px;top:556px;font-size:7.6px;color:#fff;">8:02</div>
<div class="t" style="left:873px;top:566.5px;font-size:7.6px;color:#fff;">2021/11/14</div>
<svg class="a" style="left:920.5px;top:558.5px" width="9" height="10" viewBox="0 0 9 10"><path d="M0.5 0.5H8.5V6.5H5L3 8.5V6.5H0.5Z" fill="none" stroke="#fff" stroke-width="1"/><path d="M2 2.5H7M2 4.5H7" stroke="#fff" stroke-width="0.8"/></svg>
<div class="a" style="left:940.5px;top:553px;width:1px;height:23px;background:#4a5a66"></div>
<div class="a" style="left:764px;top:563px;width:8px;height:3px;background:#fff"></div>
<div class="a" style="left:786px;top:565px;width:3px;height:3px;background:#e23b3b;border-radius:50%"></div>
<div class="t f" style="left:707.9px;top:557px;font-size:17.8px;color:rgba(225,225,225,.85);--w:107px;-webkit-text-stroke:0.5px rgba(225,225,225,.85);text-shadow:0 0 1px rgba(0,0,0,.6)">© 2021 saym.</div></div><script>function fitT(){document.querySelectorAll('.f').forEach(function(e){e.style.transform='none';var w=parseFloat(getComputedStyle(e).getPropertyValue('--w'));var n=e.getBoundingClientRect().width;if(n>0&&w>0){e.style.transformOrigin='0 0';e.style.transform='scaleX('+(w/n)+')';}});}fitT();window.addEventListener('load',fitT);if(document.fonts&&document.fonts.ready){document.fonts.ready.then(fitT);}</script></body></html>
